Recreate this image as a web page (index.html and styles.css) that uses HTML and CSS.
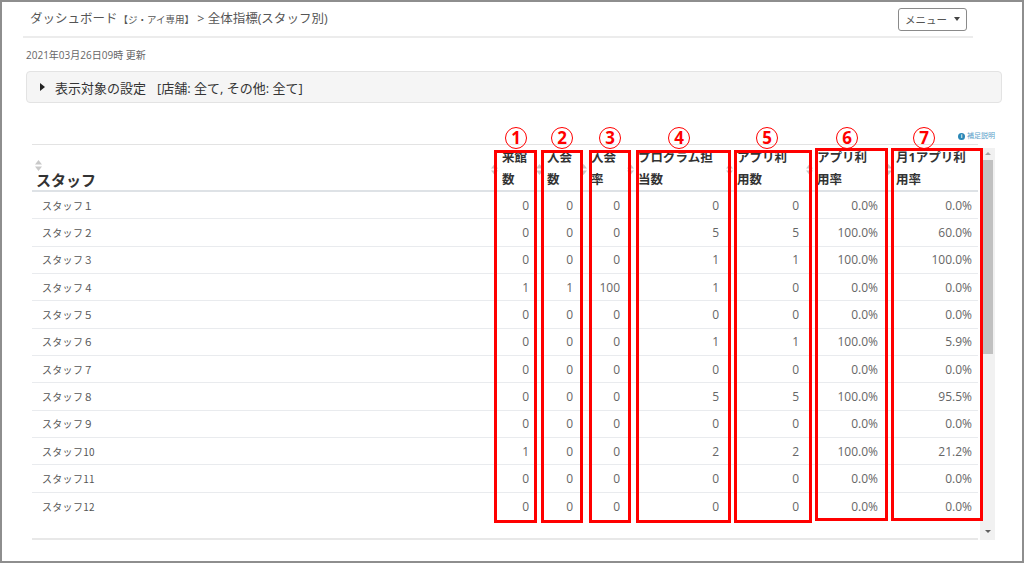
FILE: index.html
```html
<!DOCTYPE html>
<html lang="ja">
<head>
<meta charset="utf-8">
<title>全体指標(スタッフ別)</title>
<link rel="stylesheet" href="styles.css">
</head>
<body>
<div class="frame">
  <header class="topbar">
    <div class="crumb">ダッシュボード<span class="crumb-sub">【ジ・アイ専用】</span> &gt; 全体指標(スタッフ別)</div>
    <button class="menu-btn">メニュー<span class="caret"></span></button>
  </header>
  <div class="updated">2021年03月26日09時 更新</div>
  <div class="settings"><span class="tri"></span><span>表示対象の設定</span><span class="filters">[店舗: 全て, その他: 全て]</span></div>
  <div class="help-row"><span class="help-link"><span class="info-ic">i</span>補足説明</span></div>
  <div class="table-area">
    <div class="table-scroll">
      <div class="row head">
        <div class="th staff"><svg class="sort" viewBox="0 0 7 11"><path d="M3.5 0L7 4.5H0z M3.5 11L0 6.5H7z"/></svg><span>スタッフ</span></div>
        <div class="th"><svg class="sort" viewBox="0 0 7 11"><path d="M3.5 0L7 4.5H0z M3.5 11L0 6.5H7z"/></svg><span>来館<br>数</span></div>
        <div class="th"><svg class="sort" viewBox="0 0 7 11"><path d="M3.5 0L7 4.5H0z M3.5 11L0 6.5H7z"/></svg><span>入会<br>数</span></div>
        <div class="th"><svg class="sort" viewBox="0 0 7 11"><path d="M3.5 0L7 4.5H0z M3.5 11L0 6.5H7z"/></svg><span>入会<br>率</span></div>
        <div class="th"><svg class="sort" viewBox="0 0 7 11"><path d="M3.5 0L7 4.5H0z M3.5 11L0 6.5H7z"/></svg><span>プログラム担<br>当数</span></div>
        <div class="th"><svg class="sort" viewBox="0 0 7 11"><path d="M3.5 0L7 4.5H0z M3.5 11L0 6.5H7z"/></svg><span>アプリ利<br>用数</span></div>
        <div class="th"><svg class="sort" viewBox="0 0 7 11"><path d="M3.5 0L7 4.5H0z M3.5 11L0 6.5H7z"/></svg><span>アプリ利<br>用率</span></div>
        <div class="th"><svg class="sort" viewBox="0 0 7 11"><path d="M3.5 0L7 4.5H0z M3.5 11L0 6.5H7z"/></svg><span>月1アプリ利<br>用率</span></div>
      </div>
      <div class="row"><div class="td name">スタッフ１</div><div class="td num">0</div><div class="td num">0</div><div class="td num">0</div><div class="td num">0</div><div class="td num">0</div><div class="td num">0.0%</div><div class="td num">0.0%</div></div>
      <div class="row"><div class="td name">スタッフ２</div><div class="td num">0</div><div class="td num">0</div><div class="td num">0</div><div class="td num">5</div><div class="td num">5</div><div class="td num">100.0%</div><div class="td num">60.0%</div></div>
      <div class="row"><div class="td name">スタッフ３</div><div class="td num">0</div><div class="td num">0</div><div class="td num">0</div><div class="td num">1</div><div class="td num">1</div><div class="td num">100.0%</div><div class="td num">100.0%</div></div>
      <div class="row"><div class="td name">スタッフ４</div><div class="td num">1</div><div class="td num">1</div><div class="td num">100</div><div class="td num">1</div><div class="td num">0</div><div class="td num">0.0%</div><div class="td num">0.0%</div></div>
      <div class="row"><div class="td name">スタッフ５</div><div class="td num">0</div><div class="td num">0</div><div class="td num">0</div><div class="td num">0</div><div class="td num">0</div><div class="td num">0.0%</div><div class="td num">0.0%</div></div>
      <div class="row"><div class="td name">スタッフ６</div><div class="td num">0</div><div class="td num">0</div><div class="td num">0</div><div class="td num">1</div><div class="td num">1</div><div class="td num">100.0%</div><div class="td num">5.9%</div></div>
      <div class="row"><div class="td name">スタッフ７</div><div class="td num">0</div><div class="td num">0</div><div class="td num">0</div><div class="td num">0</div><div class="td num">0</div><div class="td num">0.0%</div><div class="td num">0.0%</div></div>
      <div class="row"><div class="td name">スタッフ８</div><div class="td num">0</div><div class="td num">0</div><div class="td num">0</div><div class="td num">5</div><div class="td num">5</div><div class="td num">100.0%</div><div class="td num">95.5%</div></div>
      <div class="row"><div class="td name">スタッフ９</div><div class="td num">0</div><div class="td num">0</div><div class="td num">0</div><div class="td num">0</div><div class="td num">0</div><div class="td num">0.0%</div><div class="td num">0.0%</div></div>
      <div class="row"><div class="td name">スタッフ10</div><div class="td num">1</div><div class="td num">0</div><div class="td num">0</div><div class="td num">2</div><div class="td num">2</div><div class="td num">100.0%</div><div class="td num">21.2%</div></div>
      <div class="row"><div class="td name">スタッフ11</div><div class="td num">0</div><div class="td num">0</div><div class="td num">0</div><div class="td num">0</div><div class="td num">0</div><div class="td num">0.0%</div><div class="td num">0.0%</div></div>
      <div class="row"><div class="td name">スタッフ12</div><div class="td num">0</div><div class="td num">0</div><div class="td num">0</div><div class="td num">0</div><div class="td num">0</div><div class="td num">0.0%</div><div class="td num">0.0%</div></div>
    </div>
    <div class="scrollbar"><span class="sb-up"></span><span class="sb-thumb"></span><span class="sb-down"></span></div>
  </div>

  <div class="annot">
    <span class="circ c1">1</span><span class="circ c2">2</span><span class="circ c3">3</span><span class="circ c4">4</span><span class="circ c5">5</span><span class="circ c6">6</span><span class="circ c7">7</span>
    <div class="box b1"></div><div class="box b2"></div><div class="box b3"></div><div class="box b4"></div><div class="box b5"></div><div class="box b6"></div><div class="box b7"></div>
  </div>
</div>
</body>
</html>
```
FILE: styles.css
```css
* { box-sizing: border-box; }
body {
  margin: 0;
  background: #fff;
  font-family: "Open Sans", "Noto Sans CJK JP", sans-serif;
  color: #333;
}
.frame {
  position: relative;
  width: 1024px;
  height: 563px;
  border: 2px solid #8e8e8e;
  overflow: hidden;
  background: #fff;
}

/* top bar */
.topbar {
  display: flex;
  align-items: center;
  justify-content: space-between;
  height: 36px;
  margin: 0 49px 0 21px;
  padding: 0 6px 0 7px;
  border-bottom: 2px solid #ececec;
}
.crumb {
  font-size: 12.5px;
  color: #555;
  white-space: nowrap;
  line-height: 1;
}
.crumb-sub { font-size: 9.5px; margin-left: 1px; }
.menu-btn {
  display: flex;
  align-items: center;
  width: 69px;
  height: 23px;
  padding: 0 0 0 6px;
  margin: 0;
  border: 1px solid #8a8a8a;
  border-radius: 3px;
  background: #fff;
  font-family: "Open Sans", "Noto Sans CJK JP", sans-serif;
  font-size: 10.5px;
  color: #555;
}
.caret {
  width: 0;
  height: 0;
  margin-left: 7px;
  border-top: 4px solid #444;
  border-left: 3px solid transparent;
  border-right: 3px solid transparent;
}

.updated {
  margin: 10px 0 0 24px;
  font-size: 10px;
  line-height: 14px;
  color: #666;
}

.settings {
  display: flex;
  align-items: center;
  height: 32px;
  margin: 9px 20px 0 24px;
  padding-left: 13px;
  background: #f5f5f5;
  border: 1px solid #e3e3e3;
  border-radius: 4px;
  font-size: 13px;
  color: #333;
}
.tri {
  width: 0;
  height: 0;
  margin-right: 10px;
  border-left: 5px solid #222;
  border-top: 4px solid transparent;
  border-bottom: 4px solid transparent;
}
.filters { margin-left: 11px; }

.help-row {
  display: flex;
  justify-content: flex-end;
  height: 10px;
  margin: 28px 27px 0 0;
}
.help-link {
  display: flex;
  align-items: center;
  font-size: 7px;
  line-height: 10px;
  color: #5a9fc9;
}
.info-ic {
  width: 7px;
  height: 7px;
  margin-right: 2px;
  border-radius: 50%;
  background: #2a87b6;
  color: #fff;
  font-size: 5px;
  line-height: 7px;
  font-weight: bold;
  text-align: center;
}

/* table */
.table-area {
  display: flex;
  align-items: flex-start;
  margin: 3px 0 0 30px;
}
.table-scroll {
  width: 946px;
  height: 396px;
  overflow: hidden;
  border-top: 1px solid #e3e3e3;
  border-bottom: 2px solid #e8e8e8;
}
.row {
  display: grid;
  grid-template-columns: 458px 45px 44px 47px 99px 80px 79px 94px;
  height: 27.33px;
  border-bottom: 1px solid #e9ebee;
}
.row:last-child { border-bottom: none; }
.row.head {
  height: 47px;
  border-bottom: 2px solid #dee2e6;
}
.th {
  display: flex;
  align-items: center;
  padding: 2px 0 0 1px;
  font-size: 12.5px;
  font-weight: bold;
  line-height: 22px;
  color: #333;
  white-space: nowrap;
}
.sort {
  flex: none;
  width: 7px;
  height: 11px;
  margin-right: 4px;
  fill: #c9c9c9;
}
.th.staff {
  flex-direction: column;
  align-items: flex-start;
  justify-content: flex-end;
  padding: 0 0 2px 3px;
}
.th.staff .sort { margin: 0; }
.th.staff span {
  font-size: 15px;
  line-height: 18px;
  margin-left: 1px;
}
.td {
  display: flex;
  align-items: center;
  font-size: 12px;
  color: #666;
}
.td.num {
  justify-content: flex-end;
  padding-right: 6px;
}
.td.name {
  padding-left: 10px;
  font-family: "Noto Sans CJK JP", sans-serif;
  font-size: 10px;
  letter-spacing: 0.3px;
  color: #555;
}

/* fake scrollbar */
.scrollbar {
  display: flex;
  flex-direction: column;
  align-items: center;
  width: 15px;
  height: 392px;
  margin: 4px 0 0 2px;
  padding: 0 2px;
  background: #f1f1f1;
}
.sb-up {
  width: 0;
  height: 0;
  margin-top: 4px;
  border-bottom: 3px solid #a3a3a3;
  border-left: 3px solid transparent;
  border-right: 3px solid transparent;
}
.sb-thumb {
  width: 100%;
  height: 194px;
  margin-top: 5px;
  background: #c1c1c1;
}
.sb-down {
  width: 0;
  height: 0;
  margin-top: auto;
  margin-bottom: 7px;
  border-top: 3px solid #606060;
  border-left: 3px solid transparent;
  border-right: 3px solid transparent;
}

/* red annotations */
.annot {
  position: absolute;
  inset: 0;
  pointer-events: none;
}
.box {
  position: absolute;
  top: 148px;
  height: 373px;
  border: 3px solid #ff0000;
}
.b1 { left: 492px; width: 43px; }
.b2 { left: 539px; width: 42px; }
.b3 { left: 587px; width: 42px; }
.b4 { left: 634px; width: 95px; }
.b5 { left: 732px; width: 78px; }
.b6 { left: 813px; width: 73px; top: 146px; }
.b7 { left: 889px; width: 92px; top: 146px; }
.circ {
  position: absolute;
  top: 125px;
  width: 22px;
  height: 22px;
  border: 1.5px solid #ff0000;
  border-radius: 50%;
  color: #ff0000;
  font-family: "Open Sans", sans-serif;
  font-weight: bold;
  font-size: 17px;
  line-height: 19px;
  text-align: center;
}
.c1 { left: 503px; }
.c2 { left: 549px; }
.c3 { left: 597px; }
.c4 { left: 666px; }
.c5 { left: 754px; }
.c6 { left: 834px; }
.c7 { left: 911px; }
```
